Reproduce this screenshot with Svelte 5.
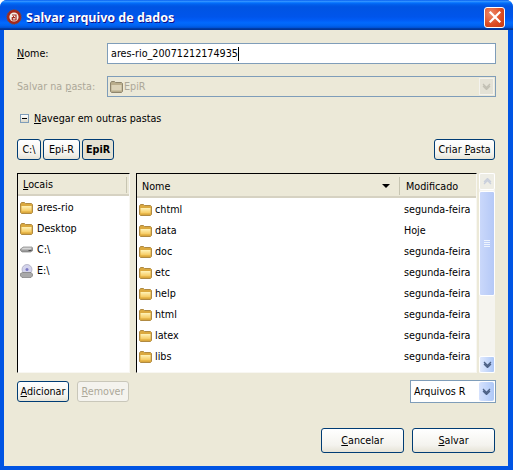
<script>
  const locais = [
    { name: "ares-rio", icon: "folder" },
    { name: "Desktop", icon: "folder" },
    { name: "C:\\", icon: "disk" },
    { name: "E:\\", icon: "cd" },
  ];
  // a ultima linha so mostra a pontinha do icone, cortada pelo painel
  const arquivos = [
    ["chtml", "segunda-feira"],
    ["data", "Hoje"],
    ["doc", "segunda-feira"],
    ["etc", "segunda-feira"],
    ["help", "segunda-feira"],
    ["html", "segunda-feira"],
    ["latex", "segunda-feira"],
    ["libs", "segunda-feira"],
    ["", ""],
  ];
</script>

{#snippet folder()}
  <svg class="ico" width="13" height="12" viewBox="0 0 13 12">
    <defs>
      <linearGradient id="pasta" x1="0" y1="0" x2="0" y2="1">
        <stop offset="0" stop-color="#fff3b8" />
        <stop offset="1" stop-color="#f5c75a" />
      </linearGradient>
    </defs>
    <path d="M.5 2 L1.5 .5 H4.5 L5.5 1.5 H11.5 L12.5 2.5 V10.5 L11.5 11.5 H1.5 L.5 10.5 Z" fill="#dba93f" stroke="#b08a42" />
    <path d="M1.5 4 H11.5 V9.5 H1.5 Z" fill="url(#pasta)" />
  </svg>
{/snippet}

{#snippet disk()}
  <svg class="ico" width="13" height="13" viewBox="0 0 13 13">
    <path d="M.5 6 L3.5 4 H12 L12.8 6 V7.5 L10.5 9 H2 L.5 7.5 Z" fill="#9c9c9c" stroke="#6d6d6d" stroke-width="0.6" />
    <path d="M1 6 L3.7 4.5 H12 L10.5 6.5 H2 Z" fill="#d6d6d6" />
    <rect x="8.5" y="7" width="3" height="1" fill="#4c4c4c" />
  </svg>
{/snippet}

{#snippet cd()}
  <svg class="ico" width="13" height="14" viewBox="0 0 13 14">
    <ellipse cx="7" cy="5.5" rx="5" ry="5" fill="#d4d4ec" stroke="#9a9ab0" stroke-width="0.6" />
    <circle cx="7" cy="5.5" r="1.5" fill="#7a78c4" />
    <path d="M.5 9.5 L2.5 8.5 H11 L12.5 10 V12 L11 13.5 H2 L.5 12 Z" fill="#a9a9a9" stroke="#6d6d6d" stroke-width="0.6" />
  </svg>
{/snippet}

{#snippet chevron(color)}
  <svg width="9" height="7" viewBox="0 0 9 7">
    <path d="M1 1 L4.5 4.5 L8 1 M1 3 L4.5 6.5 L8 3" fill="none" stroke={color} stroke-width="1.3" />
  </svg>
{/snippet}

<div class="janela">
  <div class="titulo">
    <svg class="logo" width="16" height="16" viewBox="0 0 16 16">
      <circle cx="8" cy="8" r="7.2" fill="#a5281c" stroke="#7d4b3a" stroke-width="1" stroke-dasharray="1.5 1" />
      <circle cx="8" cy="8" r="4.6" fill="#f4efe6" />
      <path d="M6 6 H10 V11 H6.3 V8.6 H9 M7 7.5 H8" fill="none" stroke="#a5281c" stroke-width="1.2" />
    </svg>
    <span class="titulo-texto">Salvar arquivo de dados</span>
    <div class="fechar">
      <svg width="14" height="14" viewBox="0 0 14 14">
        <path d="M2.5 2.5 L11.5 11.5 M11.5 2.5 L2.5 11.5" stroke="#fff" stroke-width="2.2" stroke-linecap="square" />
      </svg>
    </div>
  </div>

  <div class="corpo">
    <div class="linha nome">
      <span class="rotulo"><u>N</u>ome:</span>
      <div class="entrada"><span>ares-rio_20071212174935</span><i class="cursor"></i></div>
    </div>

    <div class="linha pasta">
      <span class="rotulo off">Salvar na <u>p</u>asta:</span>
      <div class="entrada combo-off">
        <svg class="ico" width="13" height="12" viewBox="0 0 13 12">
          <path d="M.5 2 L1.5 .5 H4.5 L5.5 1.5 H11.5 L12.5 2.5 V10.5 L11.5 11.5 H1.5 L.5 10.5 Z" fill="#b9ad8c" stroke="#8f866e" />
          <path d="M1.5 4 H11.5 V9.5 H1.5 Z" fill="#dcd3b8" />
        </svg>
        <span class="off">EpiR</span>
        <div class="seta-off">{@render chevron("#c2c0b4")}</div>
      </div>
    </div>

    <div class="navegar">
      <span class="expansor"></span>
      <span><u>N</u>avegar em outras pastas</span>
    </div>

    <div class="caminho">
      <button class="btn c">C:\</button>
      <button class="btn e1">Epi-R</button>
      <button class="btn e2"><b>EpiR</b></button>
      <button class="btn criar">Criar <u>P</u>asta</button>
    </div>

    <div class="paineis">
      <div class="painel esquerda">
        <div class="cabecalho cab-esq"><span class="cel"><u>L</u>ocais</span></div>
        <div class="lista-esq">
          {#each locais as l}
            <div class="item-esq">
              {#if l.icon === "folder"}{@render folder()}{:else if l.icon === "disk"}{@render disk()}{:else}{@render cd()}{/if}
              <span>{l.name}</span>
            </div>
          {/each}
        </div>
      </div>

      <div class="painel direita">
        <div class="cabecalho cab-dir">
          <div class="col-nome">Nome<span class="sort"></span></div>
          <div class="col-mod">Modificado</div>
        </div>
        <div class="lista-dir">
          {#each arquivos as a}
            <div class="item-dir">
              <div class="arq">{@render folder()}<span>{a[0]}</span></div>
              <span class="data">{a[1]}</span>
            </div>
          {/each}
        </div>
      </div>

      <div class="rolagem">
        <div class="sb-btn sb-topo">
          <svg width="9" height="7" viewBox="0 0 9 7"><path d="M1 6 L4.5 2.5 L8 6 M1 4 L4.5 .5 L8 4" fill="none" stroke="#c9cfdc" stroke-width="1.3" /></svg>
        </div>
        <div class="sb-polegar"><i></i><i></i><i></i><i></i></div>
        <div class="sb-resto"></div>
        <div class="sb-btn sb-baixo">{@render chevron("#4d6185")}</div>
      </div>
    </div>

    <div class="acoes">
      <button class="btn add"><u>A</u>dicionar</button>
      <button class="btn rem" disabled><u>R</u>emover</button>
      <div class="filtro">
        <span>Arquivos R</span>
        <div class="seta-on">{@render chevron("#4d6185")}</div>
      </div>
    </div>

    <div class="rodape">
      <button class="btn grande"><u>C</u>ancelar</button>
      <button class="btn grande"><u>S</u>alvar</button>
    </div>
  </div>
</div>

<style>
  :global(body) {
    background: #fff;
  }
  .janela {
    width: 513px;
    height: 470px;
    box-sizing: border-box;
    display: flex;
    flex-direction: column;
    border-radius: 7px 7px 0 0;
    overflow: hidden;
    font-family: "DejaVu Sans", sans-serif;
    font-stretch: condensed;
    font-size: 10.7px;
    color: #000;
    background: #0054e3;
  }
  .titulo {
    height: 30px;
    flex: none;
    box-sizing: border-box;
    display: flex;
    align-items: center;
    padding: 4px 8px 0 6px;
    background: linear-gradient(to bottom, #0058ee 0%, #3593ff 4%, #288eff 6%, #127dff 8%, #036ffc 10%, #0262ee 14%, #0057e5 20%, #0054e3 24%, #0055eb 56%, #005bf5 66%, #026afe 76%, #0062ef 86%, #0052d6 92%, #0040ab 94%, #003092 100%);
  }
  .logo {
    margin-right: 4px;
  }
  .titulo-texto {
    flex: 1;
    color: #fff;
    font-family: "Noto Sans", sans-serif;
    font-stretch: normal;
    font-weight: bold;
    font-size: 12.5px;
    padding-top: 1px;
    text-shadow: 1px 1px 0 #0f1089;
  }
  .fechar {
    width: 21px;
    height: 21px;
    box-sizing: border-box;
    border: 1px solid #fff;
    border-radius: 3px;
    background: radial-gradient(circle at 30% 30%, #ee8a6a, #dd4a20 60%, #c43a14);
    display: flex;
    align-items: center;
    justify-content: center;
  }
  .corpo {
    flex: 1;
    margin: 0 5px 4px 4px;
    background: #ece9d8;
    padding: 13px 12px 0 13px;
  }
  .linha {
    display: flex;
    align-items: center;
  }
  .nome {
    height: 21px;
  }
  .pasta {
    height: 21px;
    margin-top: 12px;
  }
  .rotulo {
    width: 90px;
    flex: none;
  }
  .off {
    color: #aca899;
  }
  .entrada {
    flex: 1;
    height: 21px;
    box-sizing: border-box;
    border: 1px solid #7f9db9;
    background: #fff;
    display: flex;
    align-items: center;
    padding-left: 3px;
  }
  .cursor {
    display: inline-block;
    width: 1px;
    height: 14px;
    background: #000;
  }
  .combo-off {
    background: #ece9d8;
    padding-left: 2px;
  }
  .combo-off .ico {
    margin-right: 1px;
  }
  .seta-off {
    margin-left: auto;
    width: 15px;
    height: 17px;
    margin-right: 1px;
    border: 1px solid #f4f3ee;
    box-sizing: border-box;
    background: #e4e2d6;
    display: flex;
    align-items: center;
    justify-content: center;
  }
  .navegar {
    display: flex;
    align-items: center;
    height: 16px;
    margin-top: 13px;
    padding-left: 3px;
    gap: 5px;
  }
  .expansor {
    width: 9px;
    height: 9px;
    box-sizing: border-box;
    border: 1px solid #7f9db9;
    background: linear-gradient(#fff, #dcd8c8);
    position: relative;
  }
  .expansor::after {
    content: "";
    position: absolute;
    left: 1px;
    top: 3px;
    width: 5px;
    height: 1px;
    background: #000;
  }
  .caminho {
    display: flex;
    height: 21px;
    margin-top: 13px;
    gap: 2px;
  }
  .btn {
    height: 21px;
    box-sizing: border-box;
    padding: 0;
    border: 1px solid #003c74;
    border-radius: 3px;
    background: linear-gradient(#fff, #f4f3ee 70%, #e6e3d6);
    font: inherit;
    color: #000;
  }
  .c {
    width: 24px;
  }
  .e1 {
    width: 37px;
  }
  .e2 {
    width: 32px;
    background: #e4e1d2;
  }
  .criar {
    width: 61px;
    margin-left: auto;
    margin-right: 1px;
  }
  .paineis {
    display: flex;
    height: 200px;
    margin-top: 13px;
  }
  .painel {
    box-sizing: border-box;
    height: 200px;
    background: #fff;
    border-top: 1px solid #000;
    border-left: 1px solid #000;
    border-right: 1px solid #f8f7f2;
    border-bottom: 1px solid #f8f7f2;
    display: flex;
    flex-direction: column;
    overflow: hidden;
  }
  .esquerda {
    width: 113px;
  }
  .direita {
    width: 341px;
    margin-left: 6px;
  }
  .cabecalho {
    flex: none;
    background: #ece9d8;
    display: flex;
    align-items: center;
    border-bottom: 2px solid #d6d2c2;
    box-sizing: border-box;
  }
  .cab-esq {
    height: 22px;
    padding-top: 2px;
  }
  .cel {
    flex: 1;
    padding-left: 5px;
    height: 16px;
    line-height: 16px;
    border-right: 1px solid #c7c5b2;
    margin-right: 2px;
  }
  .cab-dir {
    height: 24px;
    padding-top: 2px;
  }
  .col-nome {
    width: 263px;
    flex: none;
    box-sizing: border-box;
    padding-left: 5px;
    display: flex;
    align-items: center;
    border-right: 1px solid #c7c5b2;
    height: 18px;
  }
  .sort {
    margin-left: auto;
    margin-right: 9px;
    width: 0;
    height: 0;
    border-left: 4px solid transparent;
    border-right: 4px solid transparent;
    border-top: 4px solid #000;
  }
  .col-mod {
    padding-left: 6px;
    flex: 1;
  }
  .lista-esq {
    padding-top: 1px;
  }
  .item-esq {
    height: 21px;
    display: flex;
    align-items: center;
    padding-left: 2px;
    gap: 4px;
  }
  .ico {
    flex: none;
  }
  .lista-dir {
    padding-top: 1px;
  }
  .item-dir {
    height: 21px;
    flex: none;
    display: flex;
    align-items: center;
    padding: 0 4px 0 2px;
  }
  .arq {
    width: 265px;
    flex: none;
    display: flex;
    align-items: center;
    gap: 3px;
  }
  .data {
    white-space: nowrap;
  }
  .rolagem {
    width: 16px;
    margin-left: 2px;
    margin-right: 1px;
    height: 200px;
    display: flex;
    flex-direction: column;
    background: #f5f4ef;
  }
  .sb-btn {
    height: 17px;
    flex: none;
    box-sizing: border-box;
    border-radius: 2px;
    border: 1px solid #fff;
    display: flex;
    align-items: center;
    justify-content: center;
  }
  .sb-topo {
    background: #eeede5;
  }
  .sb-baixo {
    background: linear-gradient(to right, #e1eafe, #aec8f7);
  }
  .sb-polegar {
    height: 105px;
    margin-top: 1px;
    flex: none;
    box-sizing: border-box;
    border: 1px solid #fff;
    border-radius: 2px;
    background: linear-gradient(to right, #cad8fb, #b5c9f7);
    display: flex;
    flex-direction: column;
    align-items: center;
    justify-content: center;
    gap: 1px;
  }
  .sb-polegar i {
    width: 6px;
    height: 1px;
    background: #eef4fe;
  }
  .sb-resto {
    flex: 1;
  }
  .acoes {
    display: flex;
    align-items: center;
    height: 23px;
    margin-top: 7px;
  }
  .add {
    width: 52px;
  }
  .rem {
    width: 52px;
    margin-left: 8px;
    border-color: #c9c7ba;
    background: #f4f3ee;
    color: #aca899;
  }
  .filtro {
    margin-left: auto;
    width: 86px;
    height: 23px;
    box-sizing: border-box;
    border: 1px solid #7f9db9;
    background: #fff;
    display: flex;
    align-items: center;
    padding-left: 3px;
  }
  .seta-on {
    margin-left: auto;
    width: 15px;
    height: 19px;
    box-sizing: border-box;
    margin-right: 1px;
    border-radius: 2px;
    background: linear-gradient(to right, #d6e2fd, #aec8f7);
    display: flex;
    align-items: center;
    justify-content: center;
  }
  .rodape {
    display: flex;
    justify-content: flex-end;
    gap: 8px;
    margin-top: 25px;
    padding-right: 1px;
  }
  .grande {
    width: 83px;
    height: 25px;
  }
</style>
